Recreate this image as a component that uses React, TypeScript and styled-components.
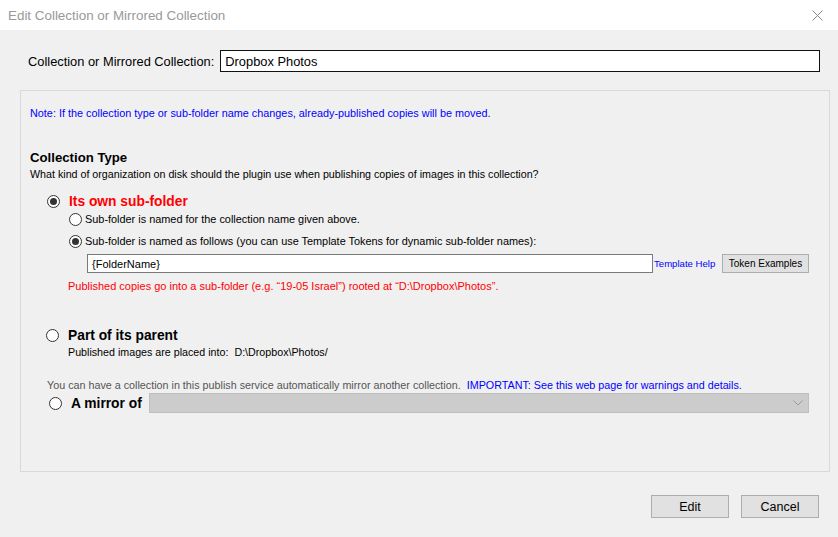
import React from "react";
import styled, { createGlobalStyle } from "styled-components";

const GlobalStyle = createGlobalStyle`
  html, body { margin: 0; padding: 0; background: #f0f0f0; }
  body { font-family: "Liberation Sans", Arial, sans-serif; font-size: 12px; color: #000; }
  * { box-sizing: border-box; }
`;

const Window = styled.div`
  width: 838px;
  height: 537px;
  display: flex;
  flex-direction: column;
  background: #f0f0f0;
  overflow: hidden;
`;

const TitleBar = styled.div`
  height: 30px;
  background: #fff;
  display: flex;
  align-items: center;
  justify-content: space-between;
  padding: 0 10px 0 8px;
`;

const Title = styled.div`
  font-size: 13.4px;
  color: #999;
`;

const CloseIcon = styled.svg`
  width: 11px;
  height: 11px;
  margin-right: 5px;
`;

const Body = styled.div`
  flex: 1;
  display: flex;
  flex-direction: column;
`;

const NameRow = styled.div`
  display: flex;
  align-items: center;
  margin: 20px 18px 0 28px;
  gap: 6px;
`;

const Label = styled.span`
  font-size: 12.85px;
  white-space: nowrap;
`;

const NameInput = styled.div`
  flex: 1;
  height: 22px;
  border: 1px solid #111;
  background: #fff;
  display: flex;
  align-items: center;
  padding-left: 4px;
  font-size: 12.85px;
`;

const GroupBox = styled.div`
  margin: 18px 8px 0 20px;
  height: 382px;
  border: 1px solid #d9d9d9;
  padding: 14px 0 0 9px;
  display: flex;
  flex-direction: column;
`;

const Line = styled.div<{ $color?: string; $mt?: number; $ml?: number; $size?: number }>`
  font-size: ${(p) => p.$size || 11}px;
  line-height: 16px;
  color: ${(p) => p.$color || "#000"};
  margin-top: ${(p) => p.$mt || 0}px;
  margin-left: ${(p) => p.$ml || 0}px;
  white-space: nowrap;
`;

const Heading = styled.div<{ $mt?: number }>`
  font-size: 13.2px;
  font-weight: bold;
  line-height: 16px;
  margin-top: ${(p) => p.$mt || 0}px;
`;

const RadioRow = styled.div<{ $mt?: number; $ml: number; $gap: number; $h?: number }>`
  display: flex;
  align-items: center;
  height: ${(p) => p.$h || 18}px;
  margin-top: ${(p) => p.$mt || 0}px;
  margin-left: ${(p) => p.$ml}px;
  gap: ${(p) => p.$gap}px;
  white-space: nowrap;
`;

const Radio = styled.span<{ $checked?: boolean }>`
  width: 13px;
  height: 13px;
  flex: none;
  border-radius: 50%;
  border: 1px solid #333;
  background: #fff;
  display: flex;
  align-items: center;
  justify-content: center;
  &::after {
    content: "";
    width: 7px;
    height: 7px;
    border-radius: 50%;
    background: #333;
    display: ${(p) => (p.$checked ? "block" : "none")};
  }
`;

const OptionTitle = styled.span<{ $red?: boolean }>`
  font-size: 13.8px;
  font-weight: bold;
  color: ${(p) => (p.$red ? "#ff0000" : "#000")};
`;

const OptionText = styled.span`
  font-size: 10.9px;
`;

const TemplateRow = styled.div`
  display: flex;
  align-items: center;
  margin: 4px 0 0 57px;
  height: 19px;
`;

const TemplateInput = styled.div`
  width: 566px;
  height: 19px;
  border: 1px solid #7a7a7a;
  background: #fff;
  display: flex;
  align-items: center;
  padding-left: 4px;
  font-size: 11px;
`;

const LinkText = styled.span`
  color: #0000ff;
  font-size: 9.6px;
  margin-left: 1px;
  width: 68px;
`;

const SmallButton = styled.div`
  width: 87px;
  height: 19px;
  border: 1px solid #adadad;
  background: #e1e1e1;
  font-size: 10px;
  display: flex;
  align-items: center;
  justify-content: center;
`;

const Path = styled.span`
  margin-left: 6px;
`;

const Link = styled.span`
  color: #0000ff;
  margin-left: 6px;
`;

const Dropdown = styled.div`
  width: 660px;
  height: 20px;
  margin-left: -2px;
  background: #cccccc;
  border: 1px solid #bfbfbf;
  display: flex;
  align-items: center;
  justify-content: flex-end;
  padding-right: 5px;
`;

const Chevron = styled.svg`
  width: 10px;
  height: 6px;
`;

const Footer = styled.div`
  display: flex;
  justify-content: flex-end;
  gap: 12px;
  margin: 23px 19px 0 0;
`;

const Button = styled.div`
  width: 78px;
  height: 23px;
  border: 1px solid #adadad;
  background: #e1e1e1;
  font-size: 12.5px;
  display: flex;
  align-items: center;
  justify-content: center;
`;

export default function App() {
  return (
    <>
      <GlobalStyle />
      <Window>
        <TitleBar>
          <Title>Edit Collection or Mirrored Collection</Title>
          <CloseIcon viewBox="0 0 11 11">
            <path d="M0.5 0.5 L10.5 10.5 M10.5 0.5 L0.5 10.5" stroke="#8a8a8a" strokeWidth="1" />
          </CloseIcon>
        </TitleBar>
        <Body>
          <NameRow>
            <Label>Collection or Mirrored Collection:</Label>
            <NameInput>Dropbox Photos</NameInput>
          </NameRow>
          <GroupBox>
            <Line $color="#0000ff" $size={10.85}>
              Note: If the collection type or sub-folder name changes, already-published copies will be moved.
            </Line>
            <Heading $mt={29}>Collection Type</Heading>
            <Line $size={10.7}>
              What kind of organization on disk should the plugin use when publishing copies of images in this collection?
            </Line>
            <RadioRow $mt={10} $ml={17} $gap={9}>
              <Radio $checked />
              <OptionTitle $red>Its own sub-folder</OptionTitle>
            </RadioRow>
            <RadioRow $ml={39} $gap={3}>
              <Radio />
              <OptionText>Sub-folder is named for the collection name given above.</OptionText>
            </RadioRow>
            <RadioRow $mt={4} $ml={39} $gap={3}>
              <Radio $checked />
              <OptionText>
                Sub-folder is named as follows (you can use Template Tokens for dynamic sub-folder names):
              </OptionText>
            </RadioRow>
            <TemplateRow>
              <TemplateInput>{"{FolderName}"}</TemplateInput>
              <LinkText>Template Help</LinkText>
              <SmallButton>Token Examples</SmallButton>
            </TemplateRow>
            <Line $color="#ff0000" $mt={5} $ml={38}>
              Published copies go into a sub-folder (e.g. “19-05 Israel”) rooted at “D:\Dropbox\Photos”.
            </Line>
            <RadioRow $mt={32} $ml={16} $gap={9}>
              <Radio />
              <OptionTitle>Part of its parent</OptionTitle>
            </RadioRow>
            <Line $ml={38} $size={10.7}>
              Published images are placed into:<Path>D:\Dropbox\Photos/</Path>
            </Line>
            <Line $color="#555" $mt={17} $ml={17} $size={10.75}>
              You can have a collection in this publish service automatically mirror another collection.
              <Link>IMPORTANT: See this web page for warnings and details.</Link>
            </Line>
            <RadioRow $ml={19} $gap={9} $h={20}>
              <Radio />
              <OptionTitle>A mirror of</OptionTitle>
              <Dropdown>
                <Chevron viewBox="0 0 10 6">
                  <path d="M0.5 0.5 L5 5 L9.5 0.5" fill="none" stroke="#9a9a9a" strokeWidth="1" />
                </Chevron>
              </Dropdown>
            </RadioRow>
          </GroupBox>
          <Footer>
            <Button>Edit</Button>
            <Button>Cancel</Button>
          </Footer>
        </Body>
      </Window>
    </>
  );
}
